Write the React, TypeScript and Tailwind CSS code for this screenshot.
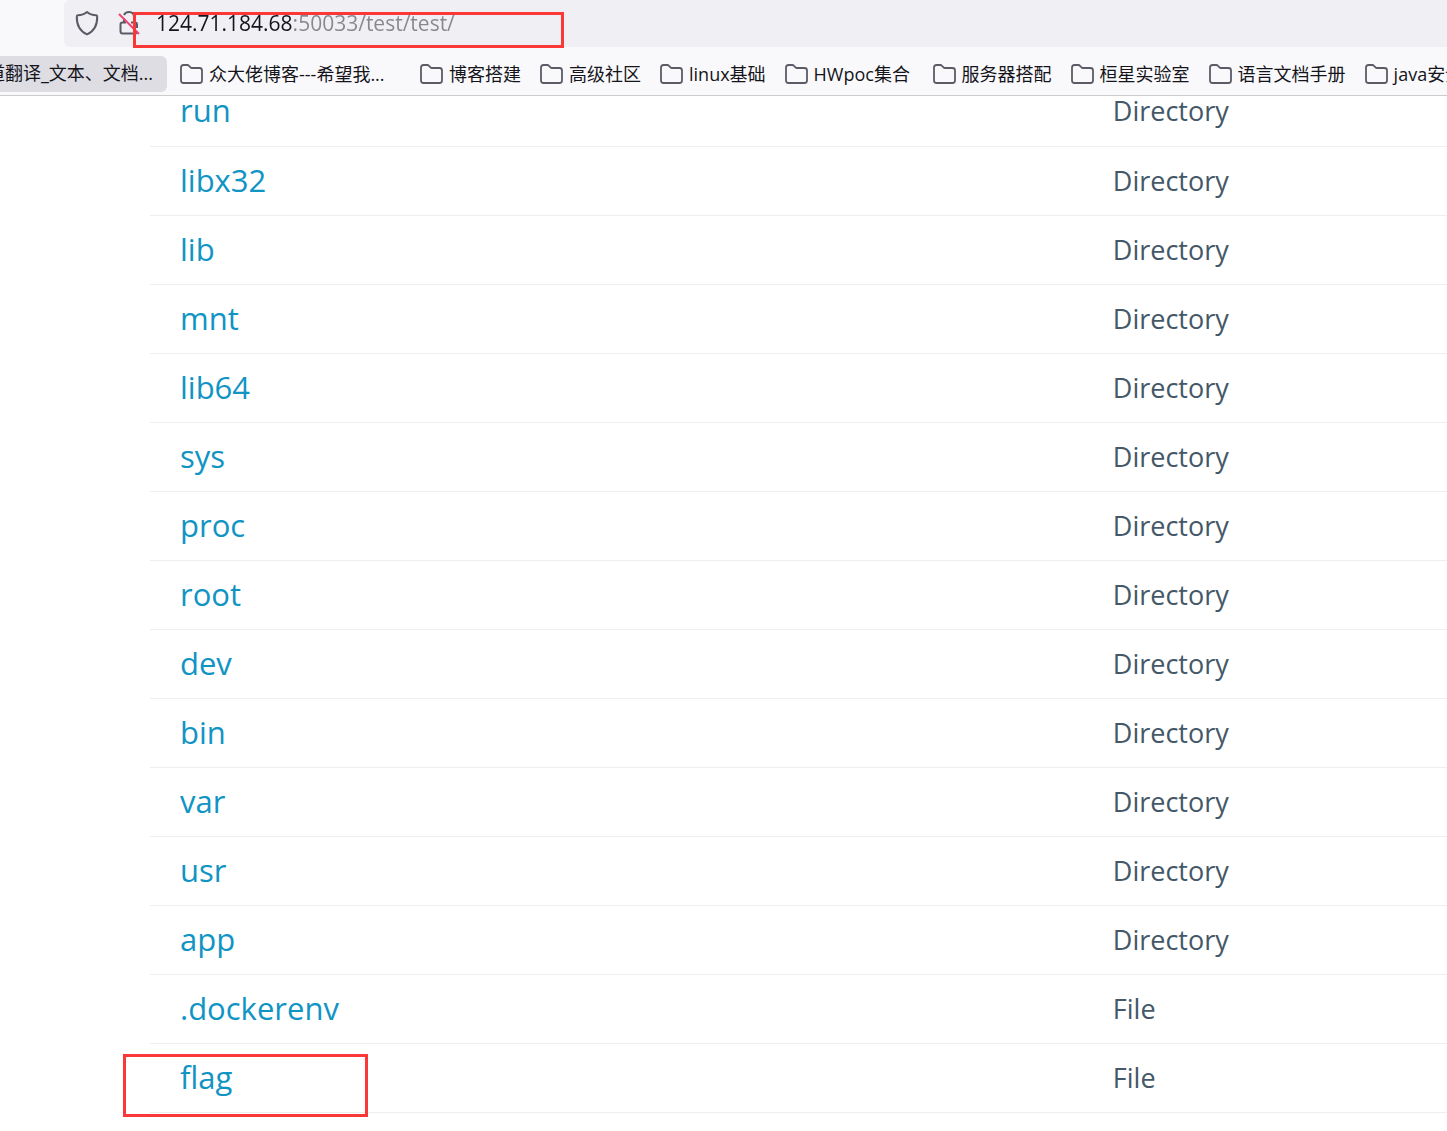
import React from "react";

const folders = [
  { name: "博客搭建" },
  { name: "高级社区" },
  { name: "linux基础" },
  { name: "HWpoc集合", width: "w-[148px]" },
  { name: "服务器搭配" },
  { name: "桓星实验室" },
  { name: "语言文档手册", width: "w-[156px]" },
  { name: "java安全" },
];

const directories = [
  "run", "libx32", "lib", "mnt", "lib64", "sys", "proc", "root", "dev", "bin", "var", "usr", "app",
];

const entries = [
  ...directories.map((name) => ({ name, type: "Directory" })),
  { name: ".dockerenv", type: "File" },
  { name: "flag", type: "File" },
];

function ShieldIcon() {
  return (
    <svg width="24" height="26" viewBox="0 0 24 26" fill="none" stroke="#5b5b66" strokeWidth="2" strokeLinejoin="round" aria-hidden="true">
      <path d="M12 2 C9.5 4.2 6 5.2 2.7 5.3 C2 5.4 1.8 5.9 1.8 6.5 C1.6 14.5 4.5 21 12 24.4 C19.5 21 22.4 14.5 22.2 6.5 C22.2 5.9 22 5.4 21.3 5.3 C18 5.2 14.5 4.2 12 2 Z" />
    </svg>
  );
}

function InsecureIcon() {
  return (
    <svg width="22" height="26" viewBox="0 0 22 26" fill="none" strokeWidth="2" aria-hidden="true">
      <path d="M6 5 C7 2.8 8.5 2 11 2 C14 2 16 4 16 7 V12 M6 8.5 V12" stroke="#5b5b66" />
      <path d="M8 12.500 H4.500 Q2.500 12.500 2.500 14.500 V21 Q2.500 23.500 4.500 23.500 H17 Q19 23.500 19 21.500 M13 12.500 H17 Q19 12.500 19 14.500 V18" stroke="#5b5b66" />
      <path d="M1 4 L21 24" stroke="#f2426e" />
    </svg>
  );
}

function FolderIcon() {
  return (
    <svg className="shrink-0" width="23" height="20" viewBox="0 0 23 20" fill="none" stroke="#5b5b66" strokeWidth="1.800" strokeLinejoin="round" aria-hidden="true">
      <path d="M1 3.500 Q1 1 3.500 1 H7.300 Q8.300 1 9 1.800 L10.500 3.400 Q11 4 12 4 H19.500 Q22 4 22 6.500 V16.500 Q22 19 19.500 19 H3.500 Q1 19 1 16.500 Z" />
    </svg>
  );
}

function Bookmark({ children, width = "pr-[19px]" }: { children: string; width?: string }) {
  return (
    <a href="#" className={`flex shrink-0 items-center gap-1.5 ${width}`}>
      <FolderIcon />
      <span className="pt-px">{children}</span>
    </a>
  );
}

export default function App() {
  return (
    <div className="min-h-screen overflow-hidden bg-white font-['Open_Sans','Noto_Sans_CJK_SC',sans-serif]">
      <header className="relative z-10 border-b border-[#cccccc] bg-[#f9f9fb] text-[#15141a]">
        <div className="ml-16 flex h-[47px] items-center gap-[19px] rounded-l-md bg-[#f0eff4] pb-0.5 pl-[11px]">
          <button type="button" aria-label="Tracking protection"><ShieldIcon /></button>
          <div className="relative flex flex-1 items-center">
            <button type="button" aria-label="Connection is not secure"><InsecureIcon /></button>
            <input
              aria-label="Address"
              type="text"
              defaultValue="124.71.184.68:50033/test/test/"
              className="ml-4 h-8 flex-1 bg-[linear-gradient(to_right,#15141a_136px,#87878c_136px)] bg-clip-text text-[21px] text-transparent caret-black outline-none"
            />
            <div className="pointer-events-none absolute top-[5px] left-[15px] h-9 w-[431px] border-3 border-[#fb3838]" />
          </div>
        </div>
        <nav aria-label="Bookmarks" className="flex h-12 items-center overflow-hidden pt-[5px] text-[18px] whitespace-nowrap">
          <a href="#" className="mr-[13px] flex h-9 w-[167px] shrink-0 items-center justify-end overflow-hidden rounded-r-md bg-[#dddde3] pr-3.5">
            有道翻译_文本、文档...
          </a>
          <Bookmark width="w-[240px]">众大佬博客---希望我...</Bookmark>
          {folders.map(({ name, width }) => (
            <Bookmark key={name} width={width}>{name}</Bookmark>
          ))}
        </nav>
      </header>
      <main className="-mt-[19px] pl-[150px]">
        <table className="w-full table-fixed border-collapse text-left">
          <tbody>
            {entries.map(({ name, type }) => (
              <tr key={name} className="h-[69px] border-b border-[#eceeef]">
                <td className="w-[72%] pb-0.5 pl-[30px] text-[31px] leading-10 text-[#1094c4]">
                  <a href="#" className="relative">
                    {name}
                    {name === "flag" && (
                      <span className="pointer-events-none absolute -top-0.5 -left-[57px] h-[63px] w-[245px] border-3 border-[#fb3838]" />
                    )}
                  </a>
                </td>
                <td className="pl-[29px] text-[27px] leading-10 text-[#445868]">{type}</td>
              </tr>
            ))}
          </tbody>
        </table>
      </main>
    </div>
  );
}
